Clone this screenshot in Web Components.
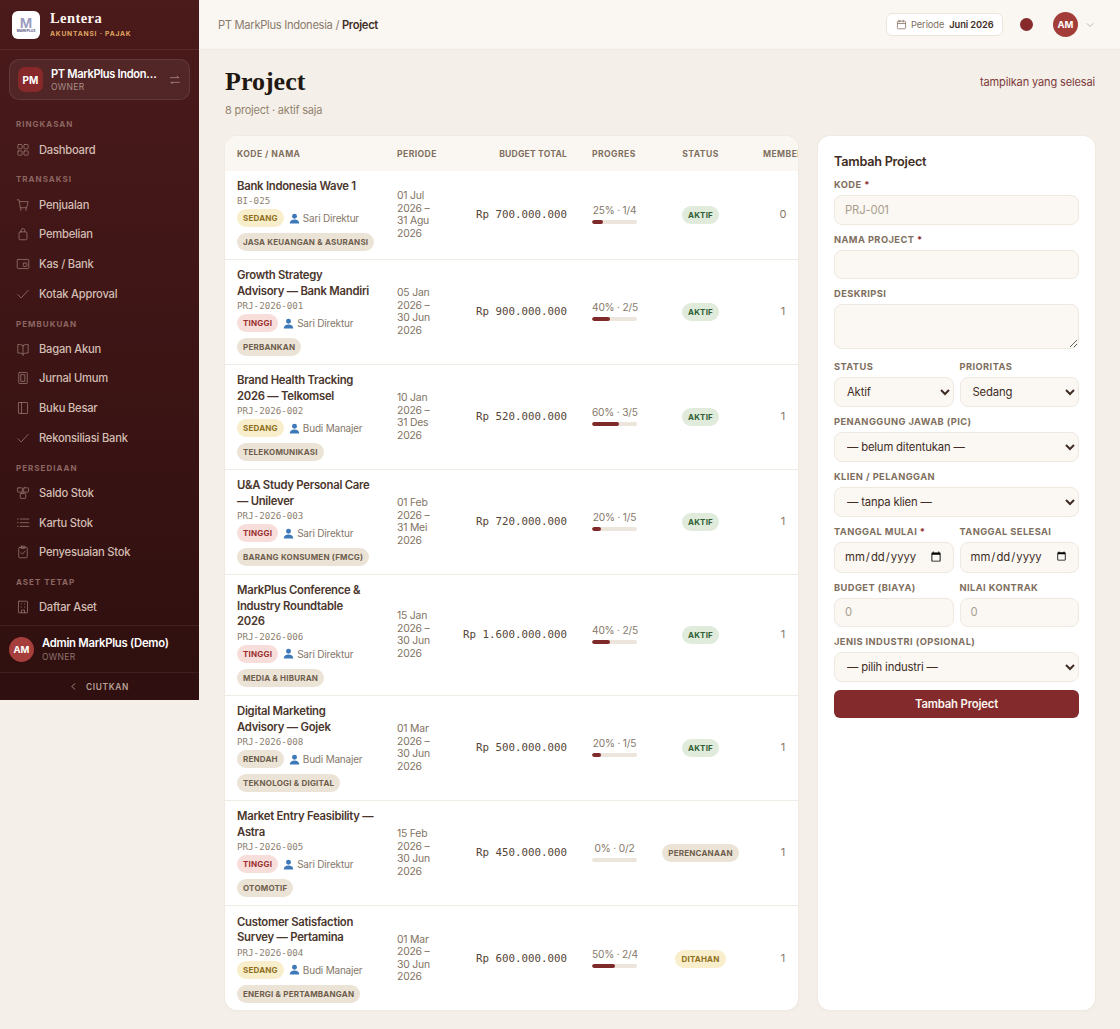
<!DOCTYPE html>
<html lang="id">
<head>
<meta charset="utf-8">
<title>Project</title>
<style>
  html, body { margin: 0; padding: 0; background: #f4efe8; }
  body { font-family: Inter, "Open Sans", sans-serif; color: #3b2a22; }
</style>
</head>
<body>
<app-shell>
  <app-sidebar slot="side"></app-sidebar>
  <top-bar slot="top"></top-bar>
  <page-head slot="main"></page-head>
  <div slot="main" style="display:flex;gap:20px;align-items:stretch">
    <project-table>
      <project-row nama="Bank Indonesia Wave 1" kode="BI-025" prio="SEDANG" pic="Sari Direktur" tag="JASA KEUANGAN &amp; ASURANSI" periode="01 Jul<br>2026 –<br>31 Agu<br>2026" budget="Rp 700.000.000" progres="25% · 1/4" pct="25" status="AKTIF" member="0" tinggi="89"></project-row>
      <project-row nama="Growth Strategy<br>Advisory — Bank Mandiri" kode="PRJ-2026-001" prio="TINGGI" pic="Sari Direktur" tag="PERBANKAN" periode="05 Jan<br>2026 –<br>30 Jun<br>2026" budget="Rp 900.000.000" progres="40% · 2/5" pct="40" status="AKTIF" member="1" tinggi="105"></project-row>
      <project-row nama="Brand Health Tracking<br>2026 — Telkomsel" kode="PRJ-2026-002" prio="SEDANG" pic="Budi Manajer" tag="TELEKOMUNIKASI" periode="10 Jan<br>2026 –<br>31 Des<br>2026" budget="Rp 520.000.000" progres="60% · 3/5" pct="60" status="AKTIF" member="1" tinggi="105"></project-row>
      <project-row nama="U&amp;A Study Personal Care<br>— Unilever" kode="PRJ-2026-003" prio="TINGGI" pic="Sari Direktur" tag="BARANG KONSUMEN (FMCG)" periode="01 Feb<br>2026 –<br>31 Mei<br>2026" budget="Rp 720.000.000" progres="20% · 1/5" pct="20" status="AKTIF" member="1" tinggi="105"></project-row>
      <project-row nama="MarkPlus Conference &amp;<br>Industry Roundtable<br>2026" kode="PRJ-2026-006" prio="TINGGI" pic="Sari Direktur" tag="MEDIA &amp; HIBURAN" periode="15 Jan<br>2026 –<br>30 Jun<br>2026" budget="Rp 1.600.000.000" progres="40% · 2/5" pct="40" status="AKTIF" member="1" tinggi="121"></project-row>
      <project-row nama="Digital Marketing<br>Advisory — Gojek" kode="PRJ-2026-008" prio="RENDAH" pic="Budi Manajer" tag="TEKNOLOGI &amp; DIGITAL" periode="01 Mar<br>2026 –<br>30 Jun<br>2026" budget="Rp 500.000.000" progres="20% · 1/5" pct="20" status="AKTIF" member="1" tinggi="105"></project-row>
      <project-row nama="Market Entry Feasibility —<br>Astra" kode="PRJ-2026-005" prio="TINGGI" pic="Sari Direktur" tag="OTOMOTIF" periode="15 Feb<br>2026 –<br>30 Jun<br>2026" budget="Rp 450.000.000" progres="0% · 0/2" pct="0" status="PERENCANAAN" member="1" tinggi="105"></project-row>
      <project-row nama="Customer Satisfaction<br>Survey — Pertamina" kode="PRJ-2026-004" prio="SEDANG" pic="Budi Manajer" tag="ENERGI &amp; PERTAMBANGAN" periode="01 Mar<br>2026 –<br>30 Jun<br>2026" budget="Rp 600.000.000" progres="50% · 2/4" pct="50" status="DITAHAN" member="1" tinggi="105" last></project-row>
    </project-table>
    <project-form></project-form>
  </div>
</app-shell>

<script>
const FONT = 'Inter, "Open Sans", sans-serif';

const ICONS = {
  dashboard: '<rect x="3" y="2.500" width="7" height="7" rx="1"/><rect x="13" y="2.500" width="7" height="7" rx="1"/><rect x="13" y="13" width="7" height="7" rx="1"/><rect x="3" y="13" width="7" height="7" rx="1"/>',
  cart: '<path d="M2 3h3l2 13h10.500l2.500-10H5.500"/><path d="M8 16v4.500M16.500 16v4.500"/>',
  bag: '<rect x="5" y="8" width="13" height="13" rx="2"/><path d="M8.500 8V5.500a3 3 0 0 1 6 0V8"/>',
  wallet: '<rect x="2" y="4" width="19" height="15" rx="1.500"/><rect x="12" y="10" width="6" height="5.500" rx="1"/>',
  check: '<path d="M3 12.500l5.500 5.500L20 5.500"/>',
  book: '<path d="M11.500 6C9.500 4.500 7 4 3 4v14c4 0 6 .5 8.500 2 2.500-1.500 4.500-2 8.500-2V4c-4 0-6.500.5-8.500 2z"/><path d="M11.500 6v17"/>',
  notebook: '<rect x="4.500" y="2.500" width="14" height="18" rx="1"/><rect x="8.500" y="6" width="6" height="11"/>',
  ledger: '<rect x="4" y="2.500" width="15" height="18" rx="1"/><path d="M9 2.500v18"/>',
  boxes: '<rect x="2.500" y="3" width="8" height="7" rx="1"/><rect x="12.500" y="3" width="8" height="7" rx="1"/><rect x="7" y="12" width="9" height="8.500" rx="1.500"/><path d="M10 10v2M13 10v2"/>',
  list: '<path d="M7 5h14M7 11h14M7 17h14"/><path d="M2.500 5h1M2.500 11h1M2.500 17h1"/>',
  clipboard: '<rect x="4.500" y="4" width="14" height="17" rx="1.500"/><rect x="8" y="2" width="7" height="3.500" rx="1"/><path d="M8 12.500l2.500 2.500 4.500-5"/>',
  building: '<rect x="4" y="2" width="15" height="19" rx="1"/><path d="M9 21v-4.500h5V21M8.500 6.500h.5M14 6.500h.5M8.500 11.500h.5M14 11.500h.5"/>',
  swap: '<path d="M2.500 7h16M15.500 4l3 3M20 16H4M7 19l-3-3"/>',
  calendar: '<rect x="3" y="4.500" width="17" height="16" rx="2"/><path d="M3 9.500h17M8 2.500v4M15 2.500v4"/>',
  chevdown: '<path d="M5 8.500l6.500 6.500L18 8.500"/>',
  chevleft: '<path d="M14.500 4.500L7.500 11.500l7 7"/>'
};

class AppIcon extends HTMLElement {
  connectedCallback() {
    const size = this.getAttribute("size") || 14;
    const width = this.getAttribute("stroke") || 1.6;
    this.attachShadow({ mode: "open" }).innerHTML = `
      <style>:host { display: inline-flex; flex: none; } svg { display: block; }</style>
      <svg width="${size}" height="${size}" viewBox="0 0 23 23" fill="none" stroke="currentColor" stroke-width="${width}" stroke-linecap="round" stroke-linejoin="round">${ICONS[this.getAttribute("name")] || ""}</svg>`;
  }
}
customElements.define("app-icon", AppIcon);

class AppShell extends HTMLElement {
  constructor() {
    super();
    this.attachShadow({ mode: "open" }).innerHTML = `
      <style>
        :host { display: flex; width: 1120px; height: 1029px; overflow: hidden; background: #f4efe8; }
        .col { flex: 1; min-width: 0; display: flex; flex-direction: column; }
        .main { padding: 18px 25px 19px 26px; display: flex; flex-direction: column; flex: 1; min-height: 0; }
        ::slotted(div) { flex: 1; min-height: 0; }
      </style>
      <slot name="side"></slot>
      <div class="col">
        <slot name="top"></slot>
        <div class="main"><slot name="main"></slot></div>
      </div>`;
  }
}
customElements.define("app-shell", AppShell);

class NavItem extends HTMLElement {
  connectedCallback() {
    this.attachShadow({ mode: "open" }).innerHTML = `
      <style>
        :host { display: flex; align-items: center; gap: 9px; height: 29.700px; padding-left: 16px; color: #d2bdb3; font-size: 11.200px; font-weight: 500; letter-spacing: -.02em; white-space: nowrap; }
        app-icon { color: #96786f; }
      </style>
      <app-icon name="${this.getAttribute("icon")}" size="14" stroke="1.300"></app-icon>
      <span><slot></slot></span>`;
  }
}
customElements.define("nav-item", NavItem);

class NavLabel extends HTMLElement {
  constructor() {
    super();
    this.attachShadow({ mode: "open" }).innerHTML = `
      <style>
        :host { display: block; height: 25.400px; line-height: 14px; padding: 8px 0 0 16px; box-sizing: border-box; color: #8c6662; font-size: 8px; font-weight: 700; letter-spacing: .125em; }
      </style>
      <slot></slot>`;
  }
}
customElements.define("nav-label", NavLabel);

class AppSidebar extends HTMLElement {
  constructor() {
    super();
    this.attachShadow({ mode: "open" }).innerHTML = `
      <style>
        :host { display: flex; flex-direction: column; flex: none; width: 199px; height: 700px; box-sizing: border-box; background: linear-gradient(180deg, #4b1a1b 0%, #2f0f0f 100%); color: #fff; font-family: ${FONT}; }
        .brand { height: 50px; box-sizing: border-box; flex: none; display: flex; align-items: center; gap: 10px; padding-left: 12px; border-bottom: 1px solid rgba(255,255,255,.08); }
        .logo { width: 28px; height: 28px; border-radius: 6px; background: #fff; flex: none; display: flex; flex-direction: column; align-items: center; justify-content: center; overflow: hidden; }
        .logo b { font: 700 15px/13px "Liberation Sans", sans-serif; color: #9a9bc0; margin-top: 1px; }
        .logo i { font: 700 3.300px/5px ${FONT}; color: #5a5c8a; font-style: normal; white-space: nowrap; }
        .bname { font: 700 14.500px/17px "Liberation Serif", serif; letter-spacing: .03em; color: #fdf6ee; }
        .bsub { font-size: 6.700px; line-height: 10px; font-weight: 700; letter-spacing: .12em; color: #e0a860; margin-top: 2px; white-space: nowrap; }
        .org { margin: 9px 9px 0; height: 41px; flex: none; box-sizing: border-box; border: 1px solid rgba(255,255,255,.09); background: rgba(255,255,255,.06); border-radius: 10px; display: flex; align-items: center; padding: 0 8px; gap: 8px; }
        .pm { width: 25px; height: 25px; border-radius: 7px; background: #87292b; display: flex; align-items: center; justify-content: center; font-size: 10px; font-weight: 700; flex: none; }
        .org .tx { flex: 1; min-width: 0; }
        .oname { font-size: 11.100px; line-height: 15px; font-weight: 600; white-space: nowrap; overflow: hidden; text-overflow: ellipsis; letter-spacing: -.03em; }
        .orole { font-size: 8.500px; line-height: 10px; letter-spacing: .04em; color: #a88e86; }
        .org app-icon { color: #b8a096; }
        .nav { flex: 1; min-height: 0; overflow: hidden; padding-top: 9.300px; }
        .user { height: 48px; flex: none; box-sizing: border-box; border-top: 1px solid rgba(255,255,255,.07); border-bottom: 1px solid rgba(255,255,255,.07); display: flex; align-items: center; gap: 8px; padding-left: 9px; }
        .am { width: 25px; height: 25px; border-radius: 50%; background: #a63f3c; display: flex; align-items: center; justify-content: center; font-size: 9.500px; font-weight: 700; flex: none; }
        .uname { font-size: 11.300px; line-height: 14px; font-weight: 600; white-space: nowrap; letter-spacing: -.025em; }
        .urole { font-size: 8.500px; line-height: 11px; letter-spacing: .04em; color: #8f7570; margin-top: 2px; }
        .collapse { height: 27px; flex: none; display: flex; align-items: center; justify-content: center; gap: 8px; font-size: 8.300px; font-weight: 600; letter-spacing: .08em; color: #b9a198; padding-right: 1px; }
      </style>
      <div class="brand">
        <div class="logo"><b>M</b><i>MARKPLUS</i></div>
        <div><div class="bname">Lentera</div><div class="bsub">AKUNTANSI · PAJAK</div></div>
      </div>
      <div class="org">
        <div class="pm">PM</div>
        <div class="tx"><div class="oname">PT MarkPlus Indonesia</div><div class="orole">OWNER</div></div>
        <app-icon name="swap" size="12" stroke="1.300"></app-icon>
      </div>
      <div class="nav">
        <nav-label>RINGKASAN</nav-label>
        <nav-item icon="dashboard">Dashboard</nav-item>
        <nav-label>TRANSAKSI</nav-label>
        <nav-item icon="cart">Penjualan</nav-item>
        <nav-item icon="bag">Pembelian</nav-item>
        <nav-item icon="wallet">Kas / Bank</nav-item>
        <nav-item icon="check">Kotak Approval</nav-item>
        <nav-label>PEMBUKUAN</nav-label>
        <nav-item icon="book">Bagan Akun</nav-item>
        <nav-item icon="notebook">Jurnal Umum</nav-item>
        <nav-item icon="ledger">Buku Besar</nav-item>
        <nav-item icon="check">Rekonsiliasi Bank</nav-item>
        <nav-label>PERSEDIAAN</nav-label>
        <nav-item icon="boxes">Saldo Stok</nav-item>
        <nav-item icon="list">Kartu Stok</nav-item>
        <nav-item icon="clipboard">Penyesuaian Stok</nav-item>
        <nav-label>ASET TETAP</nav-label>
        <nav-item icon="building">Daftar Aset</nav-item>
      </div>
      <div class="user">
        <div class="am">AM</div>
        <div><div class="uname">Admin MarkPlus (Demo)</div><div class="urole">OWNER</div></div>
      </div>
      <div class="collapse"><app-icon name="chevleft" size="9" stroke="2.200"></app-icon><span>CIUTKAN</span></div>`;
  }
}
customElements.define("app-sidebar", AppSidebar);

class TopBar extends HTMLElement {
  constructor() {
    super();
    this.attachShadow({ mode: "open" }).innerHTML = `
      <style>
        :host { display: flex; align-items: center; height: 50px; flex: none; box-sizing: border-box; padding: 0 25px 0 19px; background: #faf6f2; border-bottom: 1px solid #efe9e1; font-family: ${FONT}; }
        .crumb { flex: 1; font-size: 11.200px; color: #8a7b6c; letter-spacing: -.028em; }
        .crumb b { color: #3f2d24; font-weight: 600; }
        .chip { width: 117px; height: 23px; box-sizing: border-box; background: #fff; border: 1px solid #ece5dc; border-radius: 6px; display: flex; align-items: center; padding-left: 9px; gap: 4px; font-size: 9.300px; color: #7d6f62; white-space: nowrap; letter-spacing: -.01em; }
        .chip b { color: #3f2d24; font-weight: 600; margin-left: 1px; }
        .chip app-icon { color: #8a7468; }
        .dot { width: 13px; height: 13px; border-radius: 50%; background: #872a2b; margin-left: 17px; }
        .am { width: 25px; height: 25px; border-radius: 50%; background: #a33d3a; color: #fff; font-size: 9.500px; font-weight: 700; display: flex; align-items: center; justify-content: center; margin-left: 20px; }
        .chev { color: #b3a79a; margin-left: 7px; display: flex; }
      </style>
      <div class="crumb">PT MarkPlus Indonesia / <b>Project</b></div>
      <div class="chip"><app-icon name="calendar" size="11" stroke="1.700"></app-icon><span>Periode</span><b>Juni 2026</b></div>
      <div class="dot"></div>
      <div class="am">AM</div>
      <span class="chev"><app-icon name="chevdown" size="10" stroke="1.800"></app-icon></span>`;
  }
}
customElements.define("top-bar", TopBar);

class PageHead extends HTMLElement {
  constructor() {
    super();
    this.attachShadow({ mode: "open" }).innerHTML = `
      <style>
        :host { display: flex; justify-content: space-between; align-items: flex-start; height: 68px; flex: none; font-family: ${FONT}; }
        h1 { margin: 0; font: 700 26px/28px "Liberation Serif", serif; color: #211712; letter-spacing: 0; }
        p { margin: 6px 0 0; font-size: 11px; line-height: 16px; color: #93846f; letter-spacing: -.02em; }
        a { font-size: 11px; color: #7d3a3c; line-height: 29px; letter-spacing: -.012em; }
      </style>
      <div><h1>Project</h1><p>8 project · aktif saja</p></div>
      <a>tampilkan yang selesai</a>`;
  }
}
customElements.define("page-head", PageHead);

const GRID = "160px 66px 129px 70px 101px 64px";

class ProjectTable extends HTMLElement {
  constructor() {
    super();
    this.attachShadow({ mode: "open" }).innerHTML = `
      <style>
        :host { display: block; width: 573px; flex: none; box-sizing: border-box; background: #fff; border-radius: 12px; overflow: hidden; box-shadow: 0 0 0 1px #f0eae2, 0 1px 3px rgba(80,50,30,.05); font-family: ${FONT}; }
        .head { display: grid; grid-template-columns: ${GRID}; width: 590px; height: 35px; align-items: center; background: #faf7f3; font-size: 8.600px; font-weight: 700; letter-spacing: .05em; color: #7f6f5e; }
        .head span { padding: 0 12px; white-space: nowrap; }
        .head .r { text-align: right; padding-right: 13px; letter-spacing: .02em; }
        .c { text-align: center; }
      </style>
      <div class="head">
        <span>KODE / NAMA</span><span>PERIODE</span><span class="r">BUDGET TOTAL</span><span>PROGRES</span><span class="c">STATUS</span><span class="c">MEMBER</span>
      </div>
      <slot></slot>`;
  }
}
customElements.define("project-table", ProjectTable);

const PRIO = { SEDANG: "#f9eecb;#8d6f1c", TINGGI: "#f8dedb;#9a2f2f", RENDAH: "#ece3d7;#6e5e4c" };
const STAT = { AKTIF: "#e0ebdc;#2f5f35", PERENCANAAN: "#ece3d7;#6e5e4c", DITAHAN: "#f9eecb;#8d6f1c" };

class ProjectRow extends HTMLElement {
  connectedCallback() {
    const a = n => this.getAttribute(n);
    const [pb, pc] = PRIO[a("prio")].split(";");
    const [sb, sc] = STAT[a("status")].split(";");
    const line = this.hasAttribute("last") ? "" : "border-bottom: 1px solid #f0ebe4;";
    this.attachShadow({ mode: "open" }).innerHTML = `
      <style>
        :host { display: grid; grid-template-columns: ${GRID}; width: 590px; height: ${a("tinggi")}px; box-sizing: border-box; align-items: center; ${line} }
        .cell { padding: 0 12px; }
        .nama { font-size: 11.300px; line-height: 15.500px; font-weight: 600; color: #4a362c; letter-spacing: -.022em; white-space: nowrap; }
        .kode { font: 9.200px/13px "DejaVu Sans Mono", monospace; color: #8d7f70; }
        .meta { display: flex; align-items: center; gap: 5px; margin-top: 2px; font-size: 10px; color: #85786a; white-space: nowrap; letter-spacing: -.02em; }
        .pill { display: inline-block; height: 18px; line-height: 18px; padding: 0 6px; border-radius: 9px; font-size: 8px; font-weight: 700; letter-spacing: .025em; white-space: nowrap; }
        .prio { background: ${pb}; color: ${pc}; }
        .tag { background: #ece3d7; color: #6e5e4c; margin-top: 6px; display: table; }
        .per { font-size: 10.400px; line-height: 12.500px; color: #7f7364; letter-spacing: -.02em; white-space: nowrap; }
        .bud { font: 10.800px/14px "DejaVu Sans Mono", monospace; color: #564639; text-align: right; white-space: nowrap; padding-right: 13px; }
        .prog { text-align: center; width: 45px; padding-right: 0; margin-top: -3px; }
        .pt { font-size: 10.200px; line-height: 14px; color: #85786a; white-space: nowrap; letter-spacing: -.02em; margin-bottom: 3px; }
        .bar { height: 4px; border-radius: 2px; background: #ece5db; overflow: hidden; text-align: left; }
        .fill { height: 100%; border-radius: 2px; background: #7f2a2a; width: ${a("pct")}%; }
        .st { display: flex; justify-content: center; }
        .st .pill { background: ${sb}; color: ${sc}; }
        .mem { text-align: center; font-size: 11px; color: #85786a; margin-top: -2px; }
        .user { display: inline-flex; align-items: center; gap: 3px; color: #85786a; }
        svg { display: block; }
      </style>
      <div class="cell">
        <div class="nama">${a("nama")}</div>
        <div class="kode">${a("kode")}</div>
        <div class="meta">
          <span class="pill prio">${a("prio")}</span>
          <span class="user"><svg width="11" height="11" viewBox="0 0 12 12"><circle cx="6" cy="3.500" r="2.700" fill="#3d78b8"/><path d="M.8 11.500c0-3 2.200-4.500 5.200-4.500s5.200 1.500 5.200 4.500z" fill="#3d78b8"/></svg>${a("pic")}</span>
        </div>
        <span class="pill tag">${a("tag")}</span>
      </div>
      <div class="cell per">${a("periode")}</div>
      <div class="cell bud">${a("budget")}</div>
      <div class="cell prog"><div class="pt">${a("progres")}</div><div class="bar"><div class="fill"></div></div></div>
      <div class="cell st"><span class="pill">${a("status")}</span></div>
      <div class="cell mem">${a("member")}</div>`;
  }
}
customElements.define("project-row", ProjectRow);

class FormField extends HTMLElement {
  connectedCallback() {
    const h = this.getAttribute("h") || 30;
    this.attachShadow({ mode: "open" }).innerHTML = `
      <style>
        :host { display: block; min-width: 0; }
        label { display: block; font-size: 9.300px; line-height: 11px; font-weight: 700; letter-spacing: .045em; color: #7f6f5e; margin-bottom: 4.500px; white-space: nowrap; }
        label em { color: #8f2e2e; font-style: normal; }
        ::slotted(*) { display: block; width: 100%; height: ${h}px; box-sizing: border-box; font-family: ${FONT}; }
      </style>
      <label>${this.getAttribute("label")}</label>
      <slot></slot>`;
  }
}
customElements.define("form-field", FormField);

class ProjectForm extends HTMLElement {
  constructor() {
    super();
    this.attachShadow({ mode: "open" }).innerHTML = `
      <style>
        :host { display: block; width: 277px; flex: none; box-sizing: border-box; background: #fff; border-radius: 12px; box-shadow: 0 0 0 1px #f0eae2, 0 1px 3px rgba(80,50,30,.05); padding: 17px 16px 0 16px; font-family: ${FONT}; color: #3f2d24; }
        h3 { margin: 0 0 9px; font-size: 12.700px; line-height: 17px; font-weight: 600; color: #3f2d24; letter-spacing: -.02em; }
        .stack { display: flex; flex-direction: column; gap: 9.500px; }
        .two { display: grid; grid-template-columns: 1fr 1fr; gap: 6px; }
        input, select, textarea { width: 100%; box-sizing: border-box; background: #fbf8f4; border: 1px solid #eee8df; border-radius: 8px; font-size: 11.300px; letter-spacing: -.015em; font-family: ${FONT}; color: #3f2d24; padding: 0 10px; outline: none; margin: 0; }
        select { padding: 0 8px; }
        textarea { padding: 6px 10px; resize: vertical; }
        input::placeholder { color: #a99d8e; }
        input[type=date] { letter-spacing: 0; padding: 0 9px; }
        button { display: block; width: 100%; height: 28px; border: 0; border-radius: 6px; background: #832b2c; color: #fdf5ef; font-family: ${FONT}; font-size: 11.300px; font-weight: 600; letter-spacing: -.015em; margin-top: -1px; }
      </style>
      <h3>Tambah Project</h3>
      <div class="stack">
        <form-field label="KODE <em>*</em>"><input placeholder="PRJ-001"></form-field>
        <form-field label="NAMA PROJECT <em>*</em>" h="29"><input></form-field>
        <form-field label="DESKRIPSI" h="45"><textarea></textarea></form-field>
        <div class="two" style="margin-top:3px">
          <form-field label="STATUS"><select><option>Aktif</option></select></form-field>
          <form-field label="PRIORITAS"><select><option>Sedang</option></select></form-field>
        </div>
        <form-field label="PENANGGUNG JAWAB (PIC)"><select><option>— belum ditentukan —</option></select></form-field>
        <form-field label="KLIEN / PELANGGAN"><select><option>— tanpa klien —</option></select></form-field>
        <div class="two">
          <form-field label="TANGGAL MULAI <em>*</em>" h="31"><input type="date"></form-field>
          <form-field label="TANGGAL SELESAI" h="31"><input type="date"></form-field>
        </div>
        <div class="two">
          <form-field label="BUDGET (BIAYA)" h="29"><input placeholder="0"></form-field>
          <form-field label="NILAI KONTRAK" h="29"><input placeholder="0"></form-field>
        </div>
        <form-field label="JENIS INDUSTRI (OPSIONAL)"><select><option>— pilih industri —</option></select></form-field>
        <button>Tambah Project</button>
      </div>`;
  }
}
customElements.define("project-form", ProjectForm);
</script>
</body>
</html>
